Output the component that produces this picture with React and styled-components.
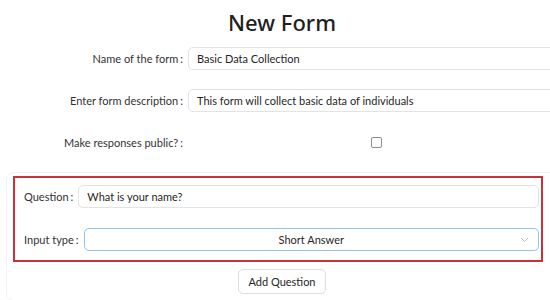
import React from 'react';
import styled, { createGlobalStyle } from 'styled-components';

const GlobalStyle = createGlobalStyle`
	body {
		margin: 0;
		overflow: hidden;
		background: #ffffff;
		font-family: Lato, "Noto Sans", sans-serif;
		color: rgba(0, 0, 0, 0.88);
	}
`;

const Page = styled.div`
	width: 564px;
	padding-top: 6px;
`;

const Title = styled.h1`
	margin: 0 0 9px;
	font-family: "Noto Sans", sans-serif;
	font-size: 22px;
	line-height: 32px;
	font-weight: 500;
	text-align: center;
	color: #1f1f1f;
`;

const FormRow = styled.div`
	display: flex;
	align-items: center;
	height: 23px;
	margin-bottom: ${props => props.gap ?? 19}px;
`;

const Label = styled.label`
	display: flex;
	justify-content: ${props => (props.fixed ? 'flex-end' : 'flex-start')};
	align-items: center;
	${props => (props.fixed ? 'width: 188px;' : '')}
	flex-shrink: 0;
	font-size: 11px;
	white-space: nowrap;
	color: #333;

	&::after {
		content: ':';
		margin: 0 5px 0 2px;
	}
`;

const Field = styled.div`
	flex: 1;
	display: flex;
	justify-content: ${props => (props.center ? 'center' : 'flex-start')};
	align-items: center;
	height: 100%;
`;

const TextInput = styled.input`
	box-sizing: border-box;
	width: 100%;
	height: 23px;
	padding: 0 8px;
	border: 1px solid #e3e3e3;
	border-radius: 5px;
	font-family: inherit;
	font-size: 11px;
	color: #262626;
	background: #fff;
	outline: none;
`;

const Checkbox = styled.span`
	box-sizing: border-box;
	width: 11px;
	height: 11px;
	border: 1px solid #8c8c8c;
	border-radius: 2px;
	background: #fff;
`;

const Card = styled.div`
	margin: 18px 0 0 6px;
	padding: 3px 20px 6px 6px;
	border: 1px solid #f2f2f2;
	border-radius: 8px;
`;

const QuestionBox = styled.div`
	padding: 7px 2px 9px 9px;
	border: 2px solid #c9323b;
`;

const Select = styled.div`
	position: relative;
	box-sizing: border-box;
	flex: 1;
	height: 23px;
	display: flex;
	align-items: center;
	justify-content: center;
	border: 1px solid #91c5ec;
	border-radius: 5px;
	font-size: 11px;
	color: #262626;
	background: #fff;
`;

const Chevron = styled.svg`
	position: absolute;
	right: 9px;
	top: 8px;
`;

const ButtonRow = styled.div`
	display: flex;
	justify-content: center;
	padding: 7px 0 0 8px;
`;

const Button = styled.button`
	box-sizing: border-box;
	width: 88px;
	height: 25px;
	border: 1px solid #dedede;
	border-radius: 5px;
	background: #fff;
	font-family: inherit;
	font-size: 11px;
	color: #262626;
	padding: 0;
`;

const App = () => (
	<Page>
		<GlobalStyle />
		<Title>New Form</Title>
		<FormRow>
			<Label fixed>Name of the form</Label>
			<Field>
				<TextInput defaultValue="Basic Data Collection" />
			</Field>
		</FormRow>
		<FormRow>
			<Label fixed>Enter form description</Label>
			<Field>
				<TextInput defaultValue="This form will collect basic data of individuals" />
			</Field>
		</FormRow>
		<FormRow gap={0}>
			<Label fixed>Make responses public?</Label>
			<Field center>
				<Checkbox />
			</Field>
		</FormRow>
		<Card>
			<QuestionBox>
				<FormRow gap={20}>
					<Label>Question</Label>
					<Field>
						<TextInput defaultValue="What is your name?" />
					</Field>
				</FormRow>
				<FormRow gap={0}>
					<Label>Input type</Label>
					<Select>
						Short Answer
						<Chevron width="9" height="6" viewBox="0 0 9 6">
							<path d="M1 1l3.5 3.5L8 1" fill="none" stroke="#bfbfbf" strokeWidth="1" />
						</Chevron>
					</Select>
				</FormRow>
			</QuestionBox>
			<ButtonRow>
				<Button>Add Question</Button>
			</ButtonRow>
		</Card>
	</Page>
);

export default App;
